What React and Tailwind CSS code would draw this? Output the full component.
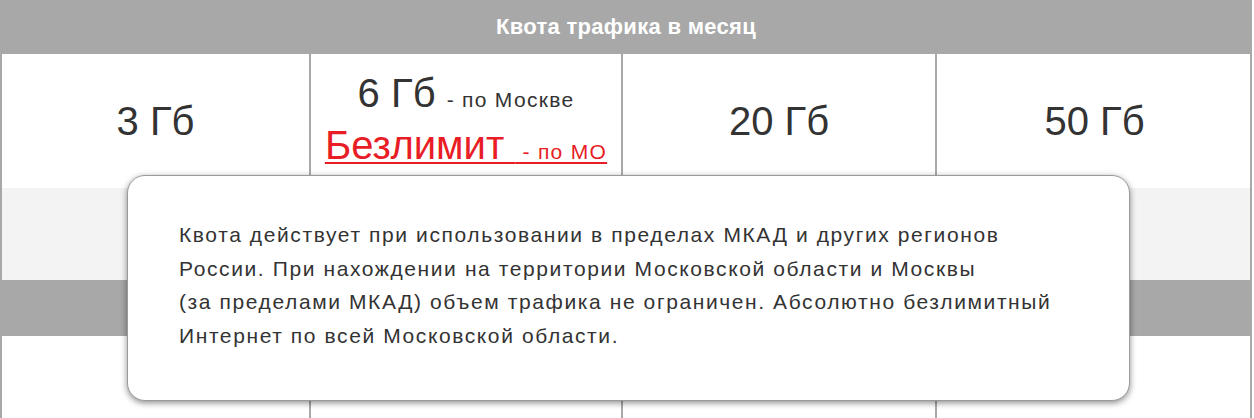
export default function App() {
  const font = { fontFamily: '"Liberation Sans", Arial, sans-serif' };
  return (
    <div className="relative w-[1254px] h-[418px] overflow-hidden bg-white text-[#333]" style={font}>
      <div className="w-[1252px]">
        {/* header */}
        <div className="h-[54px] bg-[#a8a8a8] flex items-center justify-center text-white font-bold text-[22px] tracking-[0.3px] pb-[2px]">
          Квота трафика в месяц
        </div>

        {/* quota row */}
        <div className="grid grid-cols-[309px_312px_314px_315px] h-[134px] border-x-2 border-[#a8a8a8]">
          <div className="flex items-center justify-center text-[40px] border-r-2 border-[#a8a8a8]">3 Гб</div>
          <div className="flex flex-col items-center justify-center border-r-2 border-[#a8a8a8] leading-[52px] pb-[5px]">
            <div className="text-[40px]">
              6 Гб <span className="text-[21px] tracking-[1.3px] leading-none">- по Москве</span>
            </div>
            <a className="text-[40px] text-[#e81d25] underline decoration-2 underline-offset-[3px]">
              Безлимит <span className="text-[21px] tracking-[1.3px] leading-none">&nbsp;- по МО</span>
            </a>
          </div>
          <div className="flex items-center justify-center text-[40px] border-r-2 border-[#a8a8a8]">20 Гб</div>
          <div className="flex items-center justify-center text-[40px]">50 Гб</div>
        </div>

        <div className="h-[92px] bg-[#f3f3f3] border-x-2 border-[#a8a8a8]" />
        <div className="h-[56px] bg-[#a8a8a8]" />

        <div className="grid grid-cols-[309px_312px_314px_315px] h-[82px] border-x-2 border-[#a8a8a8]">
          <div className="border-r-2 border-[#a8a8a8]" />
          <div className="border-r-2 border-[#a8a8a8]" />
          <div className="border-r-2 border-[#a8a8a8]" />
          <div />
        </div>
      </div>

      {/* tooltip */}
      <div className="absolute left-[127px] top-[175px] w-[1003px] h-[226px] bg-white rounded-[18px] border border-[#9a9a9a] shadow-[0_2px_6px_rgba(0,0,0,0.45)] pl-[51px] pt-[42px] text-[21px] tracking-[1.6px] leading-[33.6px] text-[#333]">
        Квота действует при использовании в пределах МКАД и других регионов
        <br />
        России. При нахождении на территории Московской области и Москвы
        <br />
        (за пределами МКАД) объем трафика не ограничен. Абсолютно безлимитный
        <br />
        Интернет по всей Московской области.
      </div>
    </div>
  );
}
